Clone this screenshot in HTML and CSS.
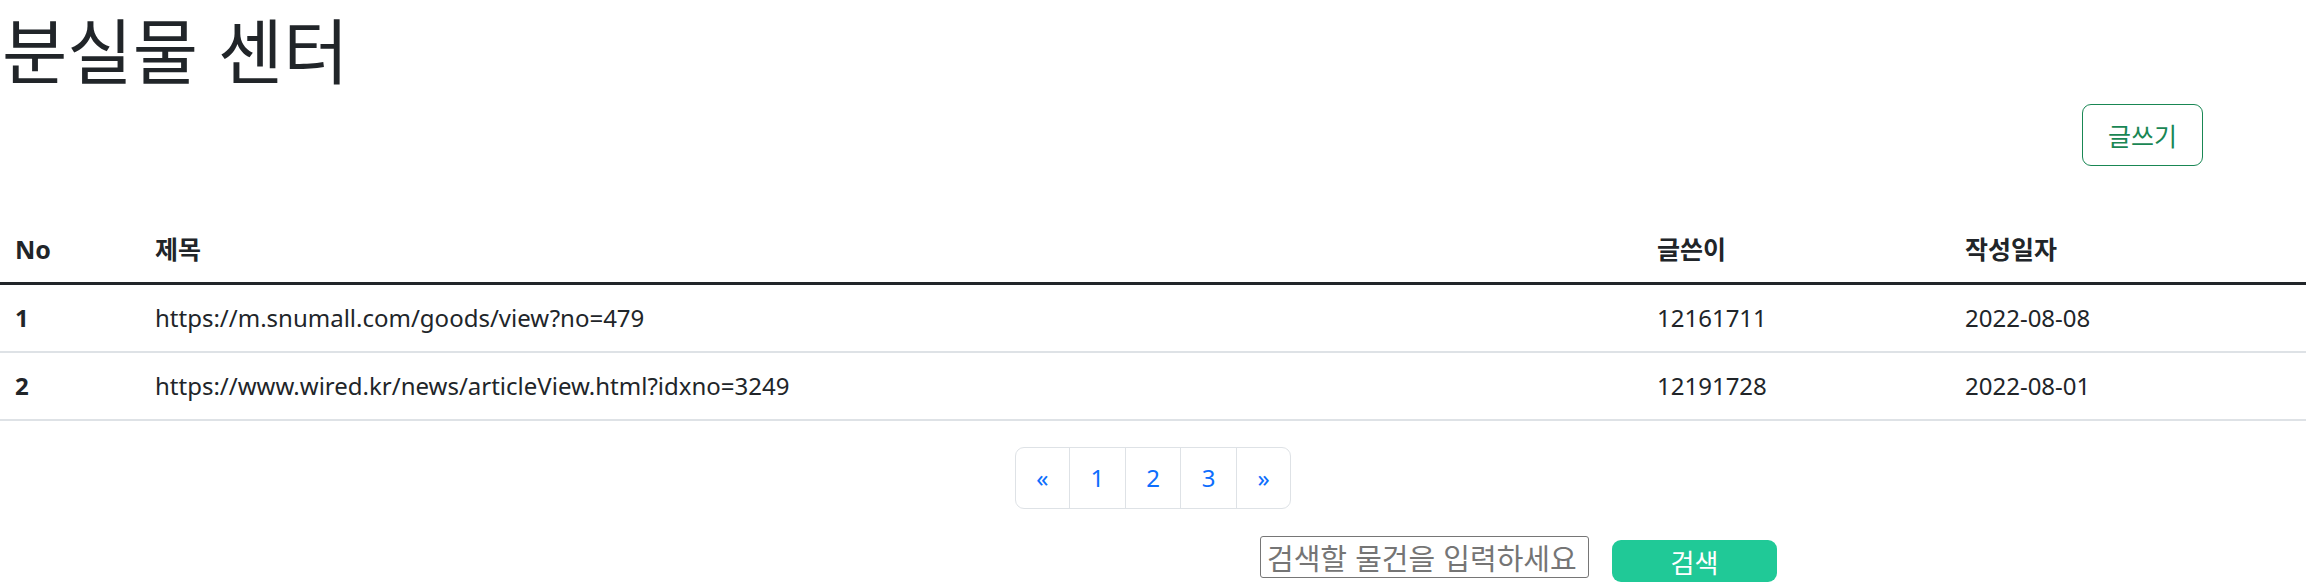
FILE: index.html
```html
<!DOCTYPE html>
<html lang="ko">
<head>
    <meta charset="UTF-8">
    <meta name="viewport" content="width=device-width, initial-scale=1.0">
    <title>분실물 센터</title>
    <link rel="stylesheet" href="styles.css">
</head>
<body>
    <div class="page">
        <h1 class="title">분실물 센터</h1>

        <div class="toolbar">
            <a class="btn-write" href="#">글쓰기</a>
        </div>

        <table class="board">
            <thead>
                <tr>
                    <th class="col-no">No</th>
                    <th class="col-title">제목</th>
                    <th class="col-writer">글쓴이</th>
                    <th class="col-date">작성일자</th>
                </tr>
            </thead>
            <tbody>
                <tr>
                    <th>1</th>
                    <td>https://m.snumall.com/goods/view?no=479</td>
                    <td>12161711</td>
                    <td>2022-08-08</td>
                </tr>
                <tr>
                    <th>2</th>
                    <td>https://www.wired.kr/news/articleView.html?idxno=3249</td>
                    <td>12191728</td>
                    <td>2022-08-01</td>
                </tr>
            </tbody>
        </table>

        <nav class="pager">
            <ul>
                <li><a href="#">&laquo;</a></li>
                <li><a href="#">1</a></li>
                <li><a href="#">2</a></li>
                <li><a href="#">3</a></li>
                <li><a href="#">&raquo;</a></li>
            </ul>
        </nav>

        <form class="search" onsubmit="return false;">
            <input type="text" class="search-input" placeholder="검색할 물건을 입력하세요">
            <button type="submit" class="search-btn">검색</button>
        </form>
    </div>
</body>
</html>
```

FILE: styles.css
```css
body {
    margin: 0;
    background-color: #fff;
    color: #212529;
    font-family: "Noto Sans", "Noto Sans CJK KR", sans-serif;
    font-size: 24px;
}

.page {
    width: 2306px;
}

.title {
    margin: 6px 0 0 2px;
    font-family: "Noto Sans CJK KR", sans-serif;
    font-size: 71px;
    font-weight: 400;
    line-height: 82px;
}

.toolbar {
    display: flex;
    justify-content: flex-end;
    margin-top: 16px;
    padding-right: 103px;
}

.btn-write {
    padding: 12px 25px;
    border: 1.5px solid #198754;
    border-radius: 9px;
    color: #198754;
    font-family: "Noto Sans CJK KR", sans-serif;
    font-size: 25px;
    line-height: 36px;
    text-decoration: none;
}

.board {
    width: 100%;
    margin-top: 50px;
    border-collapse: collapse;
}

.board th,
.board td {
    padding: 15px;
    text-align: left;
    line-height: 36px;
}

.board thead th {
    border-bottom: 3px solid #212529;
    font-size: 25px;
}

.board tbody tr {
    border-bottom: 2px solid #dee2e6;
}

.board td {
    font-weight: 400;
}

.col-no { width: 110px; }
.col-title { width: 1472px; }
.col-writer { width: 278px; }

.pager {
    display: flex;
    justify-content: center;
    margin-top: 26px;
}

.pager ul {
    display: flex;
    margin: 0;
    padding: 0;
    list-style: none;
}

.pager a {
    display: block;
    padding: 12px 20.5px;
    border: 1px solid #dee2e6;
    margin-left: -1px;
    color: #0d6efd;
    line-height: 36px;
    text-decoration: none;
}

.pager li:first-child a {
    margin-left: 0;
    border-radius: 9px 0 0 9px;
}

.pager li:last-child a {
    border-radius: 0 9px 9px 0;
}

.search {
    display: flex;
    align-items: flex-start;
    gap: 23px;
    margin-top: 27px;
    margin-left: 1260px;
}

.search-input {
    box-sizing: border-box;
    width: 329px;
    height: 42px;
    padding: 0 6px;
    border: 1px solid #767676;
    border-radius: 3px;
    font-family: "Noto Sans CJK KR", sans-serif;
    font-size: 29px;
}

.search-input::placeholder {
    color: #757575;
}

.search-btn {
    width: 165px;
    height: 42px;
    margin-top: 4px;
    border: none;
    border-radius: 9px;
    background-color: #20c997;
    color: #fff;
    font-family: "Noto Sans CJK KR", sans-serif;
    font-size: 26px;
    cursor: pointer;
}
```
